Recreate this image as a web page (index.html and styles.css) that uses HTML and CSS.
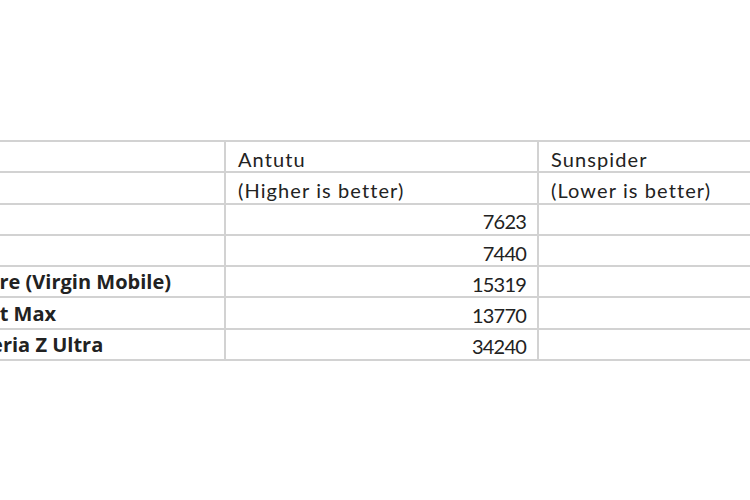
FILE: index.html
```html
<!DOCTYPE html>
<html>
<head>
<meta charset="utf-8">
<link rel="stylesheet" href="styles.css">
</head>
<body>
<div class="sheet">
  <table class="bench">
    <colgroup>
      <col class="c-name">
      <col class="c-antutu">
      <col class="c-sun">
    </colgroup>
    <tr>
      <td></td>
      <td>Antutu</td>
      <td>Sunspider</td>
    </tr>
    <tr>
      <td></td>
      <td>(Higher is better)</td>
      <td>(Lower is better)</td>
    </tr>
    <tr>
      <td class="name"></td>
      <td class="num">7623</td>
      <td></td>
    </tr>
    <tr>
      <td class="name"></td>
      <td class="num">7440</td>
      <td></td>
    </tr>
    <tr>
      <td class="name">HTC Desire (Virgin Mobile)</td>
      <td class="num">15319</td>
      <td></td>
    </tr>
    <tr>
      <td class="name">ZTE Boost Max</td>
      <td class="num">13770</td>
      <td></td>
    </tr>
    <tr>
      <td class="name">Sony Xperia Z Ultra</td>
      <td class="num">34240</td>
      <td></td>
    </tr>
  </table>
</div>
</body>
</html>
```
FILE: styles.css
```css
html, body {
  margin: 0;
  padding: 0;
  background: #ffffff;
  overflow: hidden;
}
.sheet {
  width: 750px;
  height: 500px;
  overflow: hidden;
  padding-top: 140px;
  box-sizing: border-box;
}
.bench {
  border-collapse: collapse;
  table-layout: fixed;
  width: 965px;
  margin-left: -108px;
  font-family: Lato, "Open Sans", sans-serif;
  font-size: 20px;
  letter-spacing: 1.1px;
  color: #222222;
}
.c-name { width: 332px; }
.c-antutu { width: 313px; }
.c-sun { width: 320px; }
.bench td {
  border: 2px solid #d2d2d2;
  height: 31.3px;
  padding: 4px 11px 0 12px;
  box-sizing: border-box;
  white-space: nowrap;
  overflow: hidden;
  vertical-align: middle;
  line-height: 22px;
}
.bench td.name {
  font-family: "Open Sans", Lato, sans-serif;
  font-weight: bold;
  padding: 1px 11px 0 18px;
  letter-spacing: 0;
}
.bench td.num {
  text-align: right;
  letter-spacing: -0.8px;
}
```
